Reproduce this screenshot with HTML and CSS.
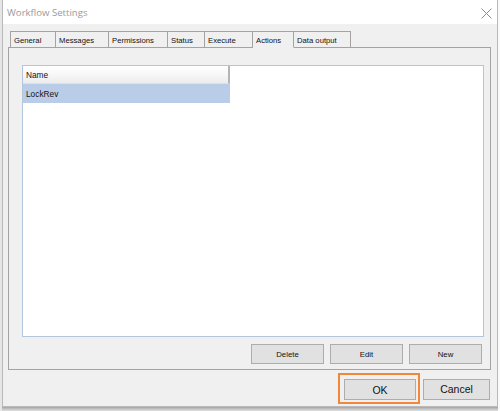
FILE: index.html
```html
<!DOCTYPE html>
<html>
<head>
<meta charset="utf-8">
<link rel="stylesheet" href="styles.css">
</head>
<body>
<div class="screen">
  <div class="window">
    <div class="titlebar">
      <span class="title">Workflow Settings</span>
      <svg class="close" width="11" height="11" viewBox="0 0 11 11"><path d="M0.5 0.5 L10.5 10.5 M10.5 0.5 L0.5 10.5" stroke="#8a8a8a" stroke-width="1" fill="none"/></svg>
    </div>
    <div class="body">
      <div class="tabs">
        <div class="tab">General</div>
        <div class="tab">Messages</div>
        <div class="tab">Permissions</div>
        <div class="tab">Status</div>
        <div class="tab">Execute</div>
        <div class="tab active">Actions</div>
        <div class="tab">Data output</div>
      </div>
      <div class="panel">
        <div class="list">
          <div class="list-header"><span class="col">Name</span></div>
          <div class="row selected"><span class="col">LockRev</span></div>
        </div>
        <div class="panel-buttons">
          <button class="btn small">Delete</button>
          <button class="btn small">Edit</button>
          <button class="btn small">New</button>
        </div>
      </div>
      <div class="footer">
        <div class="focus"><button class="btn big ok">OK</button></div>
        <button class="btn big cancel">Cancel</button>
      </div>
    </div>
  </div>
  <div class="shadow"></div>
</div>
</body>
</html>
```
FILE: styles.css
```css
html, body {
  margin: 0;
  padding: 0;
  background: #ffffff;
}
body {
  font-family: "Liberation Sans", Arial, sans-serif;
  width: 500px;
  height: 411px;
  overflow: hidden;
}
.screen {
  width: 500px;
  height: 411px;
  background: linear-gradient(to right, #e6e6e6 0, #e6e6e6 2px, #fafafa 2px);
  display: flex;
  flex-direction: column;
}
.window {
  margin-left: 2px;
  width: 494px;
  height: 406px;
  border: 1px solid #b9b9b9;
  border-top: none;
  background: #f0f0f0;
  display: flex;
  flex-direction: column;
}
.shadow {
  margin-left: 2px;
  width: 496px;
  height: 4px;
  background: linear-gradient(to bottom, #8f8f8f, #dcdcdc);
  opacity: 0.8;
}
.titlebar {
  height: 24px;
  background: #ffffff;
  display: flex;
  align-items: center;
  justify-content: space-between;
  padding: 0 4px 0 4px;
  flex-shrink: 0;
}
.title {
  font-family: "Open Sans", "Noto Sans", sans-serif;
  font-size: 9.6px;
  color: #9a9a9a;
  margin-top: 1px;
}
.close {
  margin-right: 1px;
  margin-top: 2px;
}
.body {
  flex: 1;
  display: flex;
  flex-direction: column;
  padding: 7px 0 0 5px;
}
.tabs {
  display: flex;
  margin-left: 2px;
  height: 17px;
  position: relative;
  z-index: 1;
}
.tab {
  box-sizing: border-box;
  height: 17px;
  border: 1px solid #a3a3a3;
  border-left: none;
  border-bottom: 1px solid #a3a3a3;
  background: #f0f0f0;
  font-size: 7.7px;
  color: #111;
  padding: 5px 0 0 3px;
  line-height: 8px;
}
.tab:first-child { border-left: 1px solid #a3a3a3; width: 46px; }
.tab:nth-child(2) { width: 53px; }
.tab:nth-child(3) { width: 59px; }
.tab:nth-child(4) { width: 37px; }
.tab:nth-child(5) { width: 48px; }
.tab:nth-child(6) { width: 41px; }
.tab:nth-child(7) { width: 57px; }
.tab.active {
  border-bottom-color: #f0f0f0;
  background: #f0f0f0;
}
.panel {
  box-sizing: border-box;
  width: 483px;
  height: 323px;
  margin-top: -1px;
  border: 1px solid #a3a3a3;
  background: #f0f0f0;
  display: flex;
  flex-direction: column;
  padding: 17px 6px 5px 13px;
}
.list {
  flex: 1;
  background: #ffffff;
  border: 1px solid #b3c7dc;
}
.list-header {
  width: 207px;
  height: 18px;
  box-sizing: border-box;
  background: linear-gradient(to bottom, #ffffff 0%, #f7f7f7 50%, #ececec 100%);
  border-right: 2px solid #b5b5b5;
  border-bottom: 1px solid #e0e0e0;
  display: flex;
  align-items: center;
}
.row {
  width: 207px;
  height: 19px;
  display: flex;
  align-items: center;
}
.row.selected {
  background: #b9cde9;
}
.col {
  font-size: 8.3px;
  color: #111;
  padding-left: 3px;
}
.panel-buttons {
  display: flex;
  justify-content: flex-end;
  gap: 6px;
  margin-top: 7px;
  padding-right: 2px;
}
.btn {
  box-sizing: border-box;
  font-family: "Liberation Sans", Arial, sans-serif;
  background: #e1e1e1;
  border: 1px solid #adadad;
  color: #111;
  padding: 0;
  margin: 0;
}
.btn.small {
  width: 73px;
  height: 20px;
  font-size: 7.8px;
}
.footer {
  display: flex;
  justify-content: flex-end;
  align-items: center;
  gap: 3px;
  padding-right: 7px;
  margin-top: 3px;
}
.focus {
  box-sizing: border-box;
  border: 2px solid #f0883a;
  padding: 4px 2px 2px 4px;
}
.btn.big {
  height: 21px;
  font-size: 10.5px;
}
.btn.ok { width: 72px; }
.btn.cancel { width: 67px; margin-top: 1px; }
```
